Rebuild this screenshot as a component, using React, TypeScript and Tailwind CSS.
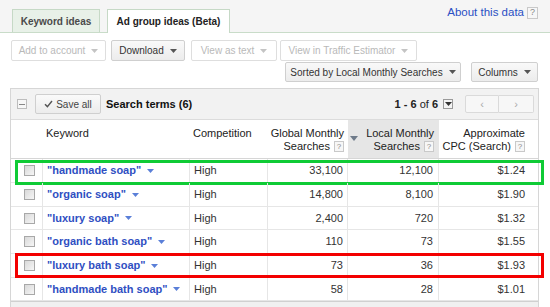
import React from "react";

const Caret = ({ className = "" }: { className?: string }) => (
  <svg width="7" height="4" viewBox="0 0 7 4" className={className}>
    <path d="M0 0h7L3.5 4z" fill="currentColor" />
  </svg>
);

const Help = ({ big = false }: { big?: boolean }) => (
  <span
    className={
      big
        ? "inline-flex h-[12px] w-[11px] items-center justify-center border border-[#c9c9c9] bg-[#f7f7f7] text-[9px] leading-none text-[#8a8a8a]"
        : "inline-flex h-[11px] w-[10px] items-center justify-center border border-[#c9c9c9] bg-[#f7f7f7] text-[8px] leading-none text-[#8a8a8a]"
    }
  >
    ?
  </span>
);

const Btn = ({ label, disabled, className }: { label: string; disabled?: boolean; className: string }) => (
  <div
    className={
      "flex items-center justify-center gap-[6px] rounded-[2px] border text-[10px] " +
      (disabled
        ? "border-[#dedede] bg-white text-[#b9b9b9] "
        : "border-[#cfcfcf] bg-gradient-to-b from-[#f9f9f9] to-[#ececec] text-[#333] ") +
      className
    }
  >
    <span>{label}</span>
    <Caret className={disabled ? "text-[#c4c4c4]" : "text-[#555]"} />
  </div>
);

const rows = [
  { kw: "handmade soap", g: "33,100", l: "12,100", c: "$1.24", h: "h-[24px]", box: "green" },
  { kw: "organic soap", g: "14,800", l: "8,100", c: "$1.90", h: "h-[24px]", box: "" },
  { kw: "luxury soap", g: "2,400", l: "720", c: "$1.32", h: "h-[23px]", box: "" },
  { kw: "organic bath soap", g: "110", l: "73", c: "$1.55", h: "h-[24px]", box: "" },
  { kw: "luxury bath soap", g: "73", l: "36", c: "$1.93", h: "h-[24px]", box: "red" },
  { kw: "handmade bath soap", g: "58", l: "28", c: "$1.01", h: "h-[23px]", box: "" },
];

const cols = "grid grid-cols-[32px_147px_78px_80px_91px_99px]";

export default function App() {
  return (
    <div className="h-[307px] w-[550px] overflow-hidden bg-white font-['Liberation_Sans',Arial,sans-serif] text-[11px] text-[#333]">
      {/* tabs */}
      <div className="relative h-[33px] border-b border-[#c9dcc9] bg-[#f5f5f5]">
        <div className="flex h-full items-end gap-[7px] pl-[12px]">
          <div className="flex h-[23px] w-[88px] items-center justify-center border border-b-0 border-[#c6d9c6] bg-[#e8f1e8] text-[10px] font-bold text-[#4a4a4a]">
            Keyword ideas
          </div>
          <div className="-mb-px flex h-[24px] w-[123px] items-center justify-center border border-b-0 border-[#c6d9c6] bg-white text-[10px] font-bold text-[#222]">
            Ad group ideas (Beta)
          </div>
        </div>
        <div className="absolute right-[12px] top-[4px] flex items-center gap-[3px]">
          <span className="text-[11.5px] text-[#2a4fc4]">About this data</span>
          <Help big />
        </div>
      </div>

      {/* action buttons */}
      <div className="mt-[7px] flex h-[21px] pl-[11px]">
        <Btn label="Add to account" disabled className="w-[95px]" />
        <Btn label="Download" className="ml-[5px] w-[74px]" />
        <Btn label="View as text" disabled className="ml-[6px] w-[86px]" />
        <Btn label="View in Traffic Estimator" disabled className="ml-[3px] w-[137px]" />
      </div>
      <div className="mt-[1px] flex h-[20px] justify-end gap-[10px] pr-[12px]">
        <Btn label="Sorted by Local Monthly Searches" className="w-[176px]" />
        <Btn label="Columns" className="w-[67px]" />
      </div>

      {/* results panel */}
      <div className="ml-[10px] mt-[6px] w-[529px] border-x border-t border-[#d6d6d6]">
        <div className="flex h-[31px] items-center border-b border-[#dcdcdc] bg-[#f2f2f2] pl-[6px] pr-[4px]">
          <span className="flex h-[10px] w-[10px] items-center justify-center border border-[#bdbdbd] bg-[#f7f7f7]">
            <span className="h-px w-[6px] bg-[#888]" />
          </span>
          <div className="ml-[8px] flex h-[20px] w-[66px] items-center justify-center gap-[3px] rounded-[2px] border border-[#cfcfcf] bg-gradient-to-b from-[#fafafa] to-[#ececec] text-[10px] text-[#444]">
            <svg width="9" height="8" viewBox="0 0 9 8">
              <path d="M1 4.2l2.4 2.4L8 1" fill="none" stroke="#555" strokeWidth="1.4" />
            </svg>
            <span>Save all</span>
          </div>
          <span className="ml-[5px] font-bold text-[#111]">Search terms (6)</span>
          <div className="ml-auto flex items-center">
            <span className="text-[#222]">
              <b>1 - 6</b> of <b>6</b>
            </span>
            <span className="ml-[5px] flex h-[10px] w-[10px] items-center justify-center border border-[#9a9a9a] bg-[#f4f4f4]">
              <Caret className="text-[#333]" />
            </span>
            <div className="ml-[12px] flex h-[18px]">
              <div className="flex w-[34px] items-center justify-center rounded-l-[2px] border border-[#dadada] bg-[#f7f7f7] text-[11px] text-[#aaa]">
                ‹
              </div>
              <div className="flex w-[35px] items-center justify-center rounded-r-[2px] border border-l-0 border-[#dadada] bg-[#f7f7f7] text-[11px] text-[#aaa]">
                ›
              </div>
            </div>
          </div>
        </div>

        {/* header */}
        <div className={cols + " h-[39px] border-b border-[#d6d6d6] leading-[13px] text-[#222]"}>
          <div />
          <div className="pl-[3px] pt-[7px]">Keyword</div>
          <div className="pl-[3px] pt-[7px]">Competition</div>
          <div className="flex flex-col items-end pr-[4px] pt-[7px]">
            <span>Global Monthly</span>
            <span className="flex items-center gap-[4px]">
              Searches <Help />
            </span>
          </div>
          <div className="relative flex flex-col items-end bg-[#e6e6e6] pr-[5px] pt-[7px]">
            <svg width="8" height="5" viewBox="0 0 8 5" className="absolute left-[2px] top-[16px]">
              <path d="M0 0h8L4 5z" fill="#6f7b8a" />
            </svg>
            <span>Local Monthly</span>
            <span className="flex items-center gap-[4px]">
              Searches <Help />
            </span>
          </div>
          <div className="flex flex-col items-end pr-[13px] pt-[7px]">
            <span>Approximate</span>
            <span className="flex items-center gap-[4px]">
              CPC (Search) <Help />
            </span>
          </div>
        </div>

        {/* rows */}
        {rows.map((r) => (
          <div key={r.kw} className={cols + " relative border-b border-[#e6e6e6] " + r.h}>
            <div className="flex items-center border-r border-[#e6e6e6] pl-[13px]">
              <span className="h-[11px] w-[11px] border border-[#a8a8a8] bg-gradient-to-br from-[#d9d9d9] to-[#f6f6f6]" />
            </div>
            <div className="flex items-center gap-[6px] border-r border-[#e6e6e6] pl-[4px]">
              <span className="font-bold text-[#2f4fc2]">"{r.kw}"</span>
              <Caret className="text-[#5a7fd8]" />
            </div>
            <div className="flex items-center border-r border-[#e6e6e6] pl-[4px]">High</div>
            <div className="flex items-center justify-end border-r border-[#e6e6e6] pr-[4px]">{r.g}</div>
            <div className="flex items-center justify-end border-r border-[#e6e6e6] pr-[5px]">{r.l}</div>
            <div className="flex items-center justify-end pr-[13px]">{r.c}</div>
            {r.box === "green" && (
              <div className="pointer-events-none absolute left-[4px] top-[1px] h-[25px] w-[529px] border-[3px] border-[#0fcb35]" />
            )}
            {r.box === "red" && (
              <div className="pointer-events-none absolute left-[4px] top-[-1px] h-[25px] w-[529px] border-[3px] border-[#f30000]" />
            )}
          </div>
        ))}
        <div className="h-[12px] border-t border-[#d0d0d0] bg-[#f0f0f0]" />
      </div>
    </div>
  );
}
